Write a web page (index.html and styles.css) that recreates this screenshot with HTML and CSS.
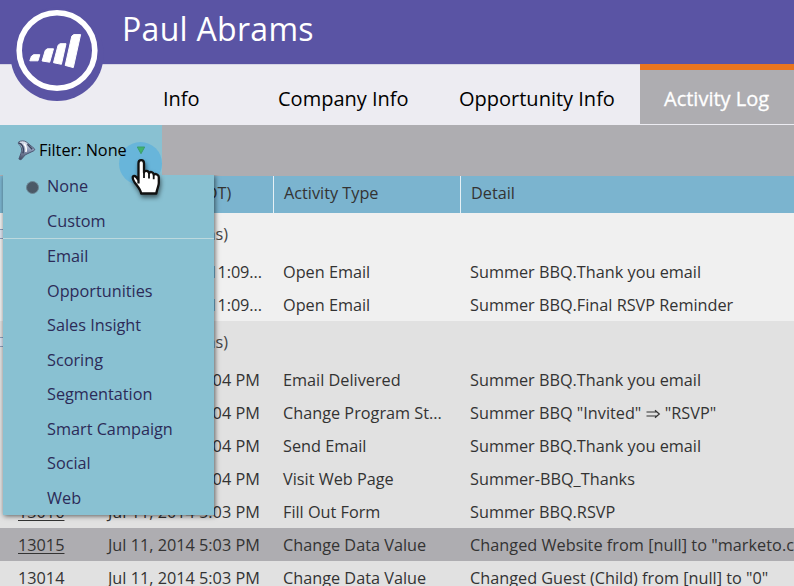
FILE: index.html
```html
<!DOCTYPE html>
<html lang="en">
<head>
<meta charset="utf-8">
<title>Paul Abrams</title>
<link rel="stylesheet" href="styles.css">
</head>
<body>
<header class="banner">
  <svg class="logo" width="96" height="104" viewBox="0 0 96 104">
    <circle cx="47" cy="54.3" r="46.7" fill="#5a54a4"/>
    <circle cx="47" cy="50.5" r="37.8" fill="none" stroke="#fff" stroke-width="5.6"/>
    <g fill="#fff" stroke="#fff" stroke-width="1" stroke-linejoin="round">
      <path d="M19.8 60.8l1.7-4.6 2-1.5h6.3l-1.8 6.1z"/>
      <path d="M32.1 61l3.2-10.7 2-1.5h6.2l-3.8 13.4z"/>
      <path d="M43.5 62.7l4.6-17.5 2-1.5h5.9l-4.6 20.6z"/>
      <path d="M55.2 65.4l6.6-29.3 2-1.5h6.8l-7.3 33z"/>
    </g>
  </svg>
  <h1>Paul Abrams</h1>
</header>
<nav class="tabs">
  <a class="tab info"><span>Info</span></a>
  <a class="tab company"><span>Company Info</span></a>
  <a class="tab opportunity"><span>Opportunity Info</span></a>
  <a class="tab active"><span>Activity Log</span></a>
</nav>
<div class="toolbar">
  <div class="filter">
    <svg class="funnel" width="20" height="22" viewBox="0 0 20 22">
      <defs><linearGradient id="steel" x2="0" y2="1"><stop stop-color="#e8ecf5"/><stop offset=".5" stop-color="#8c98b6"/><stop offset="1" stop-color="#3d465c"/></linearGradient></defs>
      <path d="M1.5 2.2C4 .3 8 .5 10 2.2l8 6.6c1 .9.6 2.1-.6 2.6L8.8 15.5 4.2 20.8l-2.2-.8 2.2-6.2C6 9.5 4 6 1.5 4z" fill="url(#steel)" stroke="#4a5470"/>
      <path d="M2 3C5.5 3.8 7.8 8 6.3 14M11 4.5l5 5.2" fill="none" stroke="#38425c" stroke-width="1.6"/>
      <path d="M7.5 4c2.2 2.5 2.6 5.5 1.8 8.5" fill="none" stroke="#fff" stroke-width="1.7"/>
    </svg>
    <span class="filter-label">Filter: None</span>
    <span class="halo"></span>
    <svg class="arrow" width="10" height="9" viewBox="0 0 10 9"><path d="M1.3 1h7.4L5 7.7z" fill="#40b56a" stroke="#3c9c70"/></svg>
  </div>
</div>
<main class="log">
  <div class="row head"><span></span><span>Date/Time (PDT)</span><span>Activity Type</span><span>Detail</span></div>
  <section class="today">
    <div class="group"><i class="toggle"></i><span>(2 Items)</span></div>
    <div class="row"><u></u><span class="stamp">Aug 14, 2014 11:09...</span><span>Open Email</span><span>Summer BBQ.Thank you email</span></div>
    <div class="row"><u></u><span class="stamp">Aug 14, 2014 11:09...</span><span>Open Email</span><span>Summer BBQ.Final RSVP Reminder</span></div>
  </section>
  <section class="earlier">
    <div class="group"><i class="toggle"></i><span>(9 Items)</span></div>
    <div class="row"><u></u><span>Jul 11, 2014 5:04 PM</span><span>Email Delivered</span><span>Summer BBQ.Thank you email</span></div>
    <div class="row"><u></u><span>Jul 11, 2014 5:04 PM</span><span>Change Program St...</span><span>Summer BBQ "Invited" <svg class="implies" width="15" height="10" viewBox="0 0 15 10"><path d="M.5 3h10.5M.5 7h10.5M9 1.3L13.3 5 9 8.7" fill="none" stroke="#333" stroke-width="1.2"/></svg> "RSVP"</span></div>
    <div class="row"><u></u><span>Jul 11, 2014 5:04 PM</span><span>Send Email</span><span>Summer BBQ.Thank you email</span></div>
    <div class="row"><u></u><span>Jul 11, 2014 5:04 PM</span><span>Visit Web Page</span><span>Summer-BBQ_Thanks</span></div>
    <div class="row"><u>13016</u><span>Jul 11, 2014 5:03 PM</span><span>Fill Out Form</span><span>Summer BBQ.RSVP</span></div>
    <div class="row selected"><u>13015</u><span>Jul 11, 2014 5:03 PM</span><span>Change Data Value</span><span class="long">Changed Website from [null] to "marketo.com"</span></div>
    <div class="row"><u>13014</u><span>Jul 11, 2014 5:03 PM</span><span>Change Data Value</span><span>Changed Guest (Child) from [null] to "0"</span></div>
  </section>
</main>
<ul class="menu">
  <li class="chosen">None</li>
  <li>Custom</li>
  <li class="divided">Email</li>
  <li>Opportunities</li>
  <li>Sales Insight</li>
  <li>Scoring</li>
  <li>Segmentation</li>
  <li>Smart Campaign</li>
  <li>Social</li>
  <li>Web</li>
</ul>
<svg class="hand" width="34" height="42" viewBox="0 0 34 42">
  <path d="M9.5 25.5V5.2C9.5 1.2 14.8 1.2 15 5.2V14.5C15.5 12.2 19.6 12.4 20 15.2 21 13.2 24.4 13.8 24.7 16.5 26.5 15.2 29.8 16.8 29.8 19V25C29.8 28 28 30.5 27.3 35.5H12.2C11.5 31 8.2 28 5.6 24.3 3.5 21.3 3 18.4 5 18 7.2 17.7 8.4 20.3 9.5 22.5" fill="#fff" stroke="#111" stroke-width="2.3" stroke-linejoin="round"/>
  <path d="M15 14.5v5.5M20 15.2v5.4M24.7 16.5v4.8" stroke="#111" stroke-width="1.8" fill="none"/>
</svg>
</body>
</html>
```
FILE: styles.css
```css
* { box-sizing: border-box; }
body { margin: 0; width: 794px; height: 586px; overflow: hidden; position: relative; background: #e1e1e1; font-family: "Open Sans", "Noto Sans", sans-serif; font-size: 16.25px; color: #333; }
.banner { height: 64px; background: #5a54a4; padding-left: 122px; position: relative; }
.banner h1 { margin: 0; font-size: 32px; letter-spacing: .3px; font-weight: 400; line-height: 58px; color: #fff; }
.logo { position: absolute; left: 10px; top: 0; z-index: 2; }
.tabs { display: flex; height: 61px; background: #edecf2; border-top: 1px solid #d5d3e4; font-size: 20px; color: #000; }
.tab { line-height: 68px; white-space: nowrap; }
.info { width: 278px; padding-left: 163px; }
.company { width: 181px; }
.opportunity { width: 181px; }
.active { width: 154px; height: 61px; margin-top: -1px; padding-left: 24px; line-height: 58px; color: #fff; background: #aeadb1; border-top: 6px solid #e9751f; border-bottom: 1px solid #edecf2; -webkit-text-stroke: .3px #fff; }
.toolbar { height: 51px; background: #aeadb1; }
.filter { width: 162px; height: 50px; padding: 0 0 0 17px; display: flex; align-items: center; background: #89c1d2; color: #000; position: relative; }
.funnel { width: 19px; height: 21px; }
.filter-label { margin-left: 3px; white-space: nowrap; position: relative; z-index: 6; }
.halo { position: absolute; left: 119px; top: 17px; width: 43px; height: 43px; border-radius: 50%; background: #68b5da; z-index: 5; }
.arrow { position: absolute; left: 136px; top: 21px; z-index: 6; }
.row { display: grid; grid-template-columns: 90px 175px 187px 1fr; height: 33px; line-height: 34px; padding-left: 18px; white-space: nowrap; overflow: hidden; }
.row u { text-underline-offset: 2px; }
.row .stamp { letter-spacing: -.1px; }
.row .long { letter-spacing: .03px; }
.head { height: 37px; line-height: 35px; background: #7bb4cf; }
.head span:nth-child(n+3) { border-left: 1px solid #e6f0f5; padding-left: 10px; margin-left: -10px; }
.today { background: #f0f0f0; }
.earlier { background: #e1e1e1; }
.group { height: 42px; line-height: 42px; display: flex; align-items: center; padding-left: 0; color: #444; }
.group span { width: 228px; text-align: right; margin-left: -4px; }
.toggle { width: 4px; height: 10px; border: 1px solid #8d9dbb; border-left: 0; background: #dde4f0; }
.selected { background: #aeadb1; }
.implies { vertical-align: 0; }
.menu { position: absolute; left: 3px; top: 175px; width: 211px; height: 340px; margin: 0; padding: 0; list-style: none; background: #89c1d2; color: #2c2b58; box-shadow: 1px 1px 5px rgba(0,0,0,.6); clip-path: inset(0 -8px -8px -8px); z-index: 3; }
.menu li { height: 34.55px; line-height: 37px; padding-left: 44px; position: relative; }
.menu li:first-child { height: 29px; line-height: 22px; }
.menu li:nth-child(2) { height: 34px; line-height: 34.6px; }
.menu .divided { border-top: 1px solid #bcd9de; line-height: 34.6px; }
.chosen::before { content: ""; position: absolute; left: 23px; top: 6px; width: 11px; height: 11px; border-radius: 50%; background: #4b5967; border: 1px solid #6c8795; }
.hand { position: absolute; left: 129px; top: 158px; z-index: 7; filter: drop-shadow(1px 3px 2px rgba(0,0,0,.5)); }
```
